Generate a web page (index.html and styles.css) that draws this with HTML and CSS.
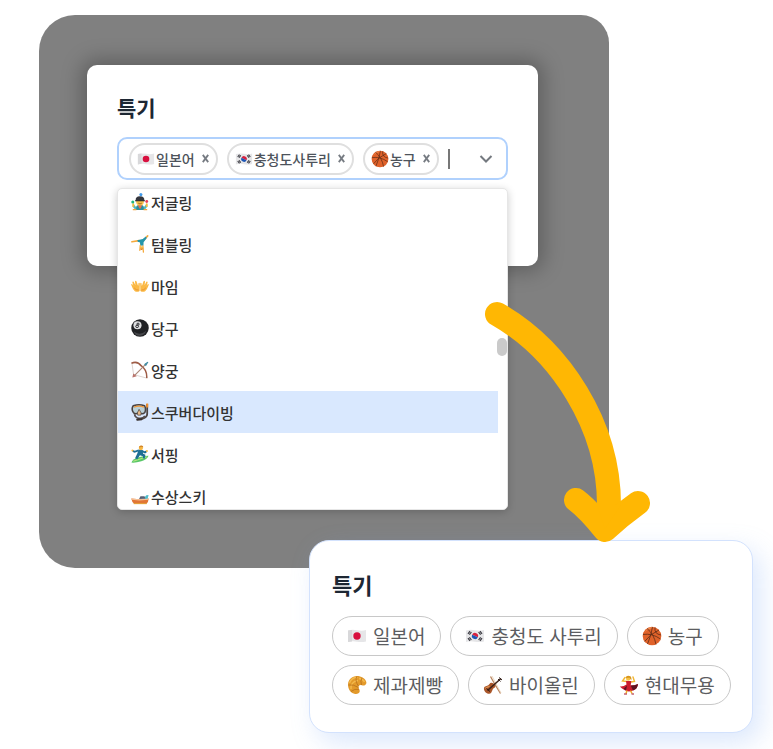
FILE: index.html
```html
<!DOCTYPE html>
<html lang="ko">
<head>
    <meta charset="UTF-8">
    <meta name="viewport" content="width=device-width, initial-scale=1.0">
    <title>특기</title>
    <link rel="stylesheet" href="styles.css">
</head>
<body>

    <!-- emoji icons -->
    <svg class="icon-defs" aria-hidden="true">
        <symbol id="flag-jp" viewBox="0 0 20 20">
            <path d="M1 4.5Q5 3.2 10 4.2T19 4v11.5q-4 1-9 .2T1 16z" fill="#e6e6e8"/>
            <path d="M1 4.5Q3 3.8 5 3.9V15.4Q3 15.4 1 16z" fill="#d8d8da"/>
            <circle cx="10" cy="10" r="3.7" fill="#d8103f"/>
        </symbol>
        <symbol id="flag-kr" viewBox="0 0 20 20">
            <path d="M1 4.5Q5 3.2 10 4.2T19 4v11.5q-4 1-9 .2T1 16z" fill="#e6e6e8"/>
            <path d="M6.900 10a3.100 3.100 0 0 1 6.200 0z" fill="#d8203f" transform="rotate(25 10 10)"/>
            <path d="M6.900 10a3.100 3.100 0 0 0 6.200 0z" fill="#1d56b5" transform="rotate(25 10 10)"/>
            <path d="M3 7.800l2-2.600M4.400 8.600l2-2.600M15 5.200l2 2.600M13.600 6l2 2.600M3 12.200l2 2.600M4.400 11.400l2 2.600M15 14.800l2-2.600M13.600 14l2-2.600" stroke="#3b3b42" stroke-width="1.200"/>
        </symbol>
        <symbol id="basketball" viewBox="0 0 20 20">
            <circle cx="10" cy="10" r="9.300" fill="#e0622a"/>
            <path d="M3 6a9 9 0 0 1 9-4.600Q6 2.500 3 6z" fill="#f39355"/>
            <path d="M2.600 15.500Q8 8 17 4M5 2.500Q12 8 14 18.500M10.500 1Q9 10 5.500 18M1 8.500Q10 7 18.500 13M13 1.400Q12 8 19 9" fill="none" stroke="#5e2c17" stroke-width=".8"/>
        </symbol>
        <symbol id="croissant" viewBox="0 0 20 20">
            <path d="M1.500 13C-.5 6 4 1 10 1c4 0 8.500 2.500 9.300 6 .5 2.500-2 4-4.300 3.300-2-.6-3.600.2-3.500 2 .1 1.500 1.500 2.200 1.200 4.200-.3 2-3 3-5.400 2.200C4.500 18 2.300 16 1.500 13z" fill="#e39a2b"/>
            <path d="M2.500 8C4 4 7 2.300 10.500 2.500M4 14c-.6-4 2-8 7-8.500M12 3.500c2.500.2 4.500 1.500 5.500 3.500" fill="none" stroke="#f3b94c" stroke-width="1.400"/>
            <path d="M10 1.200q-2.500 4 1.500 10M15 2.800q-2 3-.5 7.300M1.300 10q5-1 10.200 2.500M4 16.500q3.500-3 8-2.200" fill="none" stroke="#b8701a" stroke-width=".8"/>
        </symbol>
        <symbol id="violin" viewBox="0 0 20 20">
            <path d="M7.500 1.500Q11 8 17.500 18.500" fill="none" stroke="#b98560" stroke-width="1.300"/>
            <path d="M9 1l9 17" stroke="#e6cfb4" stroke-width=".8"/>
            <path d="M1 13c.6-2.200 3-1.800 4.200-2.800C6.800 9 6.800 7.300 8.700 7.700c2 .4 3.700 2 3.700 3.600 0 1.500-1.700 1.500-2.600 3-1 1.700-1 4.300-3.500 4.500C3.500 19 .3 15.800 1 13z" fill="#a9562a"/>
            <path d="M2.400 13.500c1-1.500 3-1.200 4.100-2.500" stroke="#dd9152" fill="none" stroke-width="1.200"/>
            <path d="M4.500 15.500L18 3.500" stroke="#3c2218" stroke-width="1.500"/>
            <path d="M16 2.500l3 2.500M15 4l2.500 2.500M3.500 13.500l3.500 3" stroke="#2e1a13" stroke-width="1"/>
        </symbol>
        <symbol id="dancer" viewBox="0 0 20 20">
            <path d="M8 6.500L3.500 6 6 2.500M12 7l3.500-.5L14 2" fill="none" stroke="#f2b632" stroke-width="1.400" stroke-linecap="round"/>
            <circle cx="9.200" cy="3.500" r="2.200" fill="#f6c244"/>
            <path d="M6.500 3q1-3.500 5-1.800 1.500 2 .7 4l-1.700-2.500z" fill="#d8951e"/>
            <path d="M7 6h5.300l-.6 4.500q4 0 7.300-1.500-.5 5-5 6.500-5 2-8.500-.5Q3 13.500.8 11.500q3.500.5 6.700-2z" fill="#cc1c2e"/>
            <path d="M11.700 10.500q4 0 7.300-1.500-.5 5-5 6.500zM4.500 13.800l3.500-3.300-1 5z" fill="#5e1421"/>
            <path d="M8 15.500L7 18.500M11.500 15.500l1.500 3" fill="none" stroke="#eeae2c" stroke-width="1.500"/>
            <path d="M5 19h3M12.500 19h2.500" stroke="#a8142a" stroke-width="1.200"/>
        </symbol>
        <symbol id="juggler" viewBox="0 0 20 20">
            <path d="M5 19q0-6 5-6t5 6z" fill="#2f8e9c"/>
            <path d="M7.500 13.500L10 18l2.500-4.500z" fill="#f36c4b"/>
            <path d="M5.500 17.500L2.500 14M14.500 17.500l3-3.500" stroke="#53b6bd" stroke-width="2.600"/>
            <path d="M2.500 14.500v-2M17.500 14.500v-2" stroke="#f6ba3f" stroke-width="2.200" stroke-linecap="round"/>
            <circle cx="10" cy="9.500" r="4.300" fill="#f9c04a"/>
            <path d="M5.300 8.500Q4.500 3.500 10 3.500t4.700 5z" fill="#34363d"/>
            <path d="M4.500 8.600h11" stroke="#22252c" stroke-width="1.200"/>
            <path d="M8 11.300q2 1.700 4 0" stroke="#8b4a23" fill="none" stroke-width=".8"/>
            <circle cx="11" cy="1.800" r="1.700" fill="#439cec"/>
            <circle cx="2" cy="10" r="1.700" fill="#1fb77e"/>
            <circle cx="17.500" cy="9.500" r="1.600" fill="#ec3e57"/>
            <path d="M2 18.500h4M14 18.500h4" stroke="#f4a13d" stroke-width="1.500"/>
        </symbol>
        <symbol id="cartwheel" viewBox="0 0 20 20">
            <path d="M1 7.500l8-1.300M14.500 5.500L18.500 1" stroke="#f5a93b" stroke-width="1.800" stroke-linecap="round"/>
            <path d="M7 5.800l6-1.300 3.500-2.700 1 1.500L14 8l-.2 4-3.600-.3-.2-3.500-2.500-.6z" fill="#2595aa"/>
            <path d="M10.300 11.500L9.800 17M13.200 12l.6 7" stroke="#f5a93b" stroke-width="1.400" stroke-linecap="round"/>
            <circle cx="11.800" cy="14.500" r="1.900" fill="#f7b94b"/>
            <path d="M10 15.200q1.900 3 3.600-.2z" fill="#d97826"/>
        </symbol>
        <symbol id="hands" viewBox="0 0 20 20">
            <path d="M9.600 15.500q-2.500 1.700-5.300.4Q2 14 .3 9q-.3-1.500.9-1.200l1.300 2L1.500 5.700q.3-1.400 1.500-.4l1.900 4-.5-4.400q.7-1.300 1.800 0l1.400 4.300.5.500.2-2.700q1.200-1.200 1.500.5z" fill="#fbb945"/>
            <path d="M10.400 15.500q2.500 1.700 5.300.4Q18 14 19.700 9q.3-1.500-.9-1.200l-1.300 2 1-4.100q-.3-1.400-1.500-.4l-1.900 4 .5-4.400q-.7-1.300-1.800 0l-1.400 4.300-.5.500-.2-2.700q-1.200-1.200-1.500.5z" fill="#fbb945"/>
            <path d="M3.500 12q2 3 5 2.500M16.500 12q-2 3-5 2.500" fill="none" stroke="#e58c2e" stroke-width=".9"/>
        </symbol>
        <symbol id="eight-ball" viewBox="0 0 20 20">
            <circle cx="10" cy="10" r="9.700" fill="#202124"/>
            <path d="M3 14q7 5 14-1-2 5-7 5.600T3 14z" fill="#45464a"/>
            <circle cx="7.200" cy="7" r="4.500" fill="#dedfe1"/>
            <ellipse cx="7.800" cy="5.700" rx="1.300" ry="1.100" fill="none" stroke="#232327" stroke-width="1"/>
            <ellipse cx="6.800" cy="8.200" rx="1.600" ry="1.300" fill="none" stroke="#232327" stroke-width="1"/>
        </symbol>
        <symbol id="archery" viewBox="0 0 20 20">
            <path d="M1 2l2 14M2.500 15l15 4" fill="none" stroke="#cfc3bd" stroke-width=".8"/>
            <path d="M.5 2.500Q7-.5 11.500 5.500 18 10 17.500 19" fill="none" stroke="#9e5c46" stroke-width="1.700"/>
            <path d="M3.500 16.500L17 3" stroke="#a98575" stroke-width="1.200"/>
            <path d="M14.500 3.500L18.300.7l1 .8-2.800 4.200z" fill="#438da4"/>
            <path d="M1.500 18.200l1-4.200 3.900 3z" fill="#ba746c"/>
        </symbol>
        <symbol id="diving-mask" viewBox="0 0 20 20">
            <path d="M18 1v11q0 4-5 5.500" fill="none" stroke="#4b4543" stroke-width="2"/>
            <path d="M18 .5V5" stroke="#f48e28" stroke-width="2.200"/>
            <path d="M2.500 3Q9 .8 15 3q2 3.500.4 7.500-2 2-4.400 1.200L9 10.500l-2.400 1.300q-2.600.5-4-1.300Q0 6.500 2.500 3z" fill="#b9cfd6" stroke="#494241" stroke-width="1.700"/>
            <path d="M3.300 4.500Q9 2.500 14.500 4.500" fill="none" stroke="#f39a3b" stroke-width="1.500"/>
            <path d="M7 11l2-4 2.300 4-.4 2.500H7.500z" fill="#e8b987" stroke="#4b4340" stroke-width=".8"/>
            <path d="M4 12.500q.5 4 5 4.500t6.500-2.500" fill="none" stroke="#554d4c" stroke-width="2"/>
            <path d="M7 18.500l5-.5" stroke="#38302e" stroke-width="2.400" stroke-linecap="round"/>
        </symbol>
        <symbol id="surfer" viewBox="0 0 20 20">
            <path d="M.5 19.500Q2 15 9 13.500T19.500 12Q18 16 11.500 18T.5 19.500z" fill="#58c768"/>
            <path d="M2.500 18Q9 16 17.500 13" stroke="#b3e780" stroke-width="1.200" fill="none"/>
            <path d="M8.500 5l4.300.7.700 4 2.500 1.200-.7 4-2.200-.3.300-2.200-3.500-1-2.900 4.300-2.500-1L7 9.500z" fill="#1d6f94"/>
            <path d="M8.500 6L4 7.500 2 6.500M12 6.500l3.500 1.800 1.800-1.300" fill="none" stroke="#1d6f94" stroke-width="2"/>
            <circle cx="11" cy="3.300" r="2.400" fill="#f7b843"/>
            <path d="M8.700 3Q9 .3 11.700.5q2 .2 2 2-3-.9-5 .5z" fill="#d3872a"/>
            <circle cx="1.600" cy="6" r="1.100" fill="#f7b843"/>
            <circle cx="17.700" cy="6.600" r="1.100" fill="#f7b843"/>
        </symbol>
        <symbol id="speedboat" viewBox="0 0 20 20">
            <path d="M.3 12.800l9 .7 10.400-.7q-.3 4-2.500 5.700H3.500Q1 17 .3 12.800z" fill="#e17635"/>
            <path d="M.3 12.800l9 .7 10.400-.7-.2 1.500-10.200.8-8.700-.9z" fill="#f6c197"/>
            <path d="M9 13.300l1.500-3H15l1.500 2.700z" fill="#596074"/>
            <path d="M15.500 11L17 9.300l2.500-.5-1 4.200h-3z" fill="#4ebccb"/>
            <path d="M3 18.500h14.500" stroke="#e2a02e" stroke-width="1"/>
        </symbol>
    </svg>

    <main class="showcase">
        <section class="backdrop">
            <div class="modal">
                <h2><label for="skill-input">특기</label></h2>

                <div class="select">
                    <div class="select-control">
                        <span class="tag"><svg class="emoji"><use href="#flag-jp"/></svg>일본어<button type="button" class="tag-remove" aria-label="일본어 삭제"><svg viewBox="0 0 10 10"><path d="M2 1l6 8M8 1l-6 8"/></svg></button></span>
                        <span class="tag"><svg class="emoji"><use href="#flag-kr"/></svg>충청도사투리<button type="button" class="tag-remove" aria-label="충청도사투리 삭제"><svg viewBox="0 0 10 10"><path d="M2 1l6 8M8 1l-6 8"/></svg></button></span>
                        <span class="tag"><svg class="emoji"><use href="#basketball"/></svg>농구<button type="button" class="tag-remove" aria-label="농구 삭제"><svg viewBox="0 0 10 10"><path d="M2 1l6 8M8 1l-6 8"/></svg></button></span>
                        <input type="text" id="skill-input" class="select-input" autocomplete="off">
                        <button type="button" class="select-toggle" aria-label="목록 열기">
                            <svg viewBox="0 0 14 10"><path d="M1.500 2L7 7.500 12.500 2"/></svg>
                        </button>
                    </div>

                    <div class="select-menu">
                        <div class="options" role="listbox" aria-label="특기">
                            <button type="button" role="option" class="option"><svg class="emoji"><use href="#juggler"/></svg>저글링</button>
                            <button type="button" role="option" class="option"><svg class="emoji"><use href="#cartwheel"/></svg>텀블링</button>
                            <button type="button" role="option" class="option"><svg class="emoji"><use href="#hands"/></svg>마임</button>
                            <button type="button" role="option" class="option"><svg class="emoji"><use href="#eight-ball"/></svg>당구</button>
                            <button type="button" role="option" class="option"><svg class="emoji"><use href="#archery"/></svg>양궁</button>
                            <button type="button" role="option" class="option active" aria-selected="true"><svg class="emoji"><use href="#diving-mask"/></svg>스쿠버다이빙</button>
                            <button type="button" role="option" class="option"><svg class="emoji"><use href="#surfer"/></svg>서핑</button>
                            <button type="button" role="option" class="option"><svg class="emoji"><use href="#speedboat"/></svg>수상스키</button>
                        </div>
                        <div class="scroll-thumb"></div>
                    </div>
                </div>
            </div>
        </section>

        <section class="result-card">
            <h2>특기</h2>
            <ul class="chips">
                <li class="chip"><svg class="emoji"><use href="#flag-jp"/></svg>일본어</li>
                <li class="chip"><svg class="emoji"><use href="#flag-kr"/></svg>충청도 사투리</li>
                <li class="chip"><svg class="emoji"><use href="#basketball"/></svg>농구</li>
                <li class="chip"><svg class="emoji"><use href="#croissant"/></svg>제과제빵</li>
                <li class="chip"><svg class="emoji"><use href="#violin"/></svg>바이올린</li>
                <li class="chip"><svg class="emoji"><use href="#dancer"/></svg>현대무용</li>
            </ul>
        </section>

        <svg class="arrow" viewBox="0 0 168 242" aria-hidden="true">
            <path d="M13 13C76 49 125 124 125 204V214"/>
            <path d="M92 199Q104 208 121 229Q136 215 154 202"/>
            <path d="M113 204h24l-16 24z"/>
        </svg>
    </main>

</body>
</html>
```

FILE: styles.css
```css
* {
    box-sizing: border-box;
}

body {
    margin: 0;
    background-color: #fff;
    font-family: "Noto Sans CJK KR", "Noto Sans", sans-serif;
    color: #1d2733;
}

button, input {
    font: inherit;
    color: inherit;
    border: none;
    background: none;
    padding: 0;
}

button {
    cursor: pointer;
}

h2 {
    margin: 0;
}

.icon-defs {
    display: none;
}

.emoji {
    flex: none;
    width: 18px;
    height: 18px;
}

.showcase {
    position: relative;
    padding: 15px 20px 17px 39px;
}

/* left panel with the open select */
.backdrop {
    margin-right: 144px;
    padding: 50px 71px 302px 48px;
    background-color: #808080;
    border-radius: 36px;
    border-top-right-radius: 28px;
}

.modal {
    padding: 27px 30px 86px;
    background-color: #fff;
    border-radius: 10px;
    box-shadow: 0 0 20px 6px rgba(0, 0, 0, 0.25);
}

.modal h2 {
    margin-bottom: 15px;
    font-size: 21px;
    line-height: 30px;
}

.select {
    position: relative;
}

.select-control {
    display: flex;
    align-items: center;
    gap: 9px;
    height: 43px;
    padding: 0 10px;
    border: 2px solid #b0d1fd;
    border-radius: 10px;
}

.tag {
    display: flex;
    align-items: center;
    flex: none;
    height: 32px;
    padding: 0 6px;
    border: 2px solid #dfdfdf;
    border-radius: 16px;
    font-size: 14px;
    font-weight: 500;
    line-height: 20px;
    color: #4d535b;
}

.tag .emoji {
    margin-right: 1px;
}

.tag-remove {
    display: flex;
    margin-left: 6px;
}

.tag-remove svg {
    width: 9px;
    height: 9px;
    fill: none;
    stroke: #777c83;
    stroke-width: 2;
}

/* the left border is the text caret */
.select-input {
    flex: 1;
    min-width: 0;
    height: 20px;
    border-left: 2px solid #777;
    outline: none;
}

.select-toggle {
    display: flex;
    padding: 0 3px;
}

.select-toggle svg {
    width: 14px;
    height: 10px;
    fill: none;
    stroke: #74797f;
    stroke-width: 2;
}

.select-menu {
    position: absolute;
    top: 51px;
    left: 0;
    right: 0;
    display: flex;
    align-items: center;
    height: 322px;
    overflow: hidden;
    background-color: #fff;
    border: 1px solid #e6e6e6;
    border-radius: 5px;
    box-shadow: 0 2px 8px rgba(0, 0, 0, 0.2);
}

.options {
    flex: 1;
    margin-right: 9px;
}

.option {
    display: flex;
    align-items: center;
    width: 100%;
    height: 42px;
    padding: 0 13px;
    gap: 2px;
    font-size: 15px;
    font-weight: 500;
    color: #333;
}

.option:hover,
.option.active {
    background-color: #d9e8fe;
}

.scroll-thumb {
    position: absolute;
    top: 149px;
    right: 0;
    width: 10px;
    height: 18px;
    background-color: #cacaca;
    border-radius: 5px;
}

/* result card */
.result-card {
    position: relative;
    margin: -28px 0 0 270px;
    padding: 27px 20px 27px 22px;
    background-color: #fff;
    border: 1px solid #d3e2fd;
    border-radius: 20px;
    box-shadow: 8px 10px 26px rgba(120, 165, 245, 0.26);
}

.result-card h2 {
    margin-bottom: 16px;
    font-size: 22px;
    line-height: 32px;
}

.chips {
    display: flex;
    flex-wrap: wrap;
    gap: 9px;
    margin: 0;
    padding: 0;
    list-style: none;
}

.chip {
    display: flex;
    align-items: center;
    gap: 6px;
    height: 40px;
    padding: 0 15px 0 14px;
    border: 1px solid #c8c8c8;
    border-radius: 20px;
    font-size: 19px;
    line-height: 28px;
    color: #5c5d61;
}

.chip .emoji {
    width: 20px;
    height: 20px;
}

.arrow {
    position: absolute;
    top: 301px;
    left: 484px;
    width: 168px;
    height: 242px;
    fill: none;
    stroke: #ffb703;
    stroke-width: 24;
    stroke-linecap: round;
    stroke-linejoin: round;
}

.arrow path:last-child {
    fill: #ffb703;
    stroke: none;
}
```
